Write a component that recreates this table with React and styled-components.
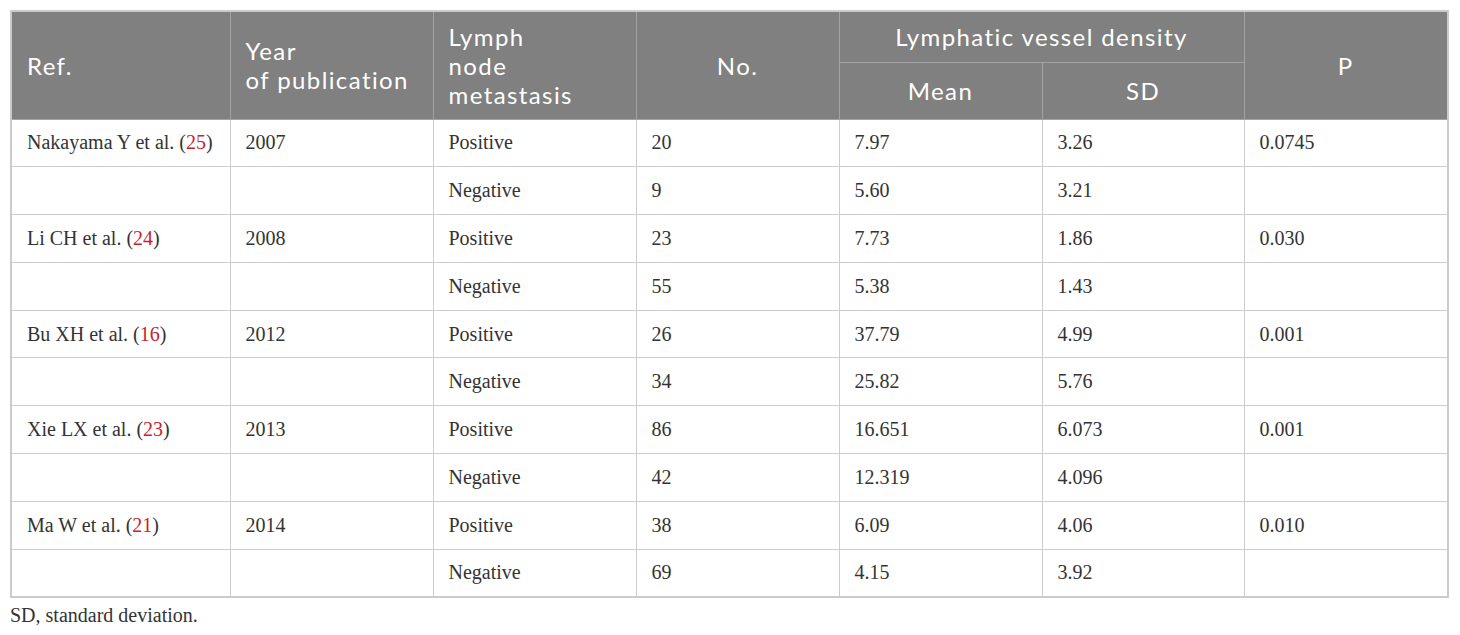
import React from 'react'
import styled, { createGlobalStyle } from 'styled-components'

const studies = [
    { ref: 'Nakayama Y et al.', cite: 25, year: 2007, p: '0.0745', pos: ['20', '7.97', '3.26'], neg: ['9', '5.60', '3.21'] },
    { ref: 'Li CH et al.', cite: 24, year: 2008, p: '0.030', pos: ['23', '7.73', '1.86'], neg: ['55', '5.38', '1.43'] },
    { ref: 'Bu XH et al.', cite: 16, year: 2012, p: '0.001', pos: ['26', '37.79', '4.99'], neg: ['34', '25.82', '5.76'] },
    { ref: 'Xie LX et al.', cite: 23, year: 2013, p: '0.001', pos: ['86', '16.651', '6.073'], neg: ['42', '12.319', '4.096'] },
    { ref: 'Ma W et al.', cite: 21, year: 2014, p: '0.010', pos: ['38', '6.09', '4.06'], neg: ['69', '4.15', '3.92'] },
]

const colWidths = [219, 203, 203, 203, 203, 202, 204]

const GlobalStyle = createGlobalStyle`
    body {
        margin: 0;
        background: #fff;
    }
`

const Page = styled.div`
    padding: 10px 0 0 10px;
`

const Table = styled.table`
    width: 1437px;
    table-layout: fixed;
    border-collapse: collapse;
    border: 2px solid #cbcbcb;
`

const Head = styled.th`
    background: #7f807f;
    color: #fff;
    font-family: Lato, "Open Sans", sans-serif;
    font-weight: 400;
    font-size: 24px;
    letter-spacing: 1.4px;
    line-height: 29px;
    text-align: ${p => (p.$center ? 'center' : 'left')};
    vertical-align: middle;
    padding: 0 15px;
    border: 1px solid #a3a3a3;
`

const HeadRow = styled.tr`
    height: ${p => p.$h}px;
`

const Row = styled.tr`
    height: 47.8px;
`

const Cell = styled.td`
    font-family: "Liberation Serif", "Times New Roman", serif;
    font-size: 20px;
    color: #333;
    padding: 0 15px;
    vertical-align: middle;
    border: 1px solid #cdcdcd;
    white-space: nowrap;
`

const Cite = styled.span`
    color: #c8232c;
`

const Note = styled.p`
    margin: 6px 0 0;
    font-family: "Liberation Serif", "Times New Roman", serif;
    font-size: 20px;
    color: #333;
`

function App() {
    return (
        <Page>
            <GlobalStyle />
            <Table>
                <colgroup>
                    {colWidths.map((w, i) => <col key={i} style={{ width: w }} />)}
                </colgroup>
                <thead>
                    <HeadRow $h={51}>
                        <Head rowSpan={2}>Ref.</Head>
                        <Head rowSpan={2}>Year<br />of publication</Head>
                        <Head rowSpan={2}>Lymph<br />node<br />metastasis</Head>
                        <Head rowSpan={2} $center>No.</Head>
                        <Head colSpan={2} $center>Lymphatic vessel density</Head>
                        <Head rowSpan={2} $center>P</Head>
                    </HeadRow>
                    <HeadRow $h={57}>
                        <Head $center>Mean</Head>
                        <Head $center>SD</Head>
                    </HeadRow>
                </thead>
                <tbody>
                    {studies.map(s => (
                        <React.Fragment key={s.ref}>
                            <Row>
                                <Cell>{s.ref} (<Cite>{s.cite}</Cite>)</Cell>
                                <Cell>{s.year}</Cell>
                                <Cell>Positive</Cell>
                                {s.pos.map((v, i) => <Cell key={i}>{v}</Cell>)}
                                <Cell>{s.p}</Cell>
                            </Row>
                            <Row>
                                <Cell />
                                <Cell />
                                <Cell>Negative</Cell>
                                {s.neg.map((v, i) => <Cell key={i}>{v}</Cell>)}
                                <Cell />
                            </Row>
                        </React.Fragment>
                    ))}
                </tbody>
            </Table>
            <Note>SD, standard deviation.</Note>
        </Page>
    )
}

export default App
